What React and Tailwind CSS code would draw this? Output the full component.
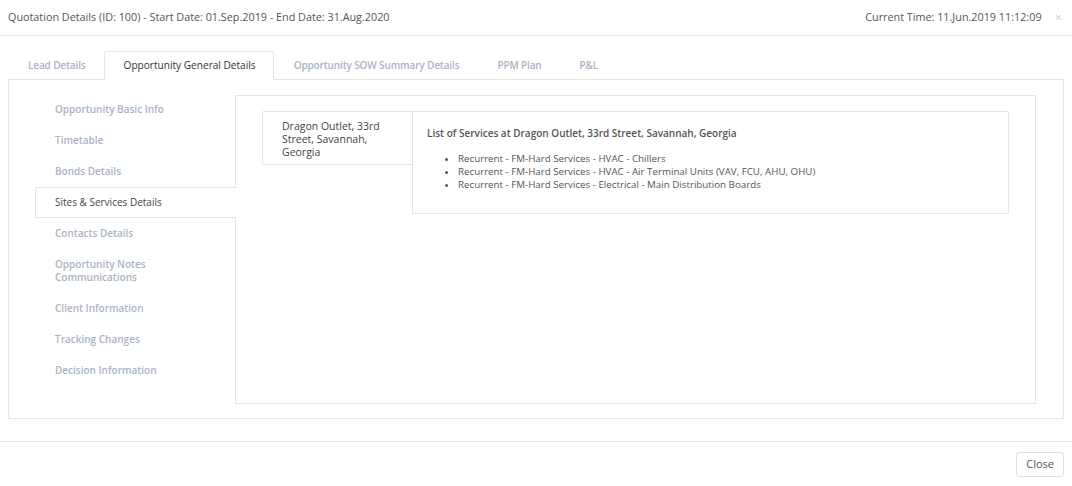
const tabs = ['Lead Details', 'Opportunity General Details', 'Opportunity SOW Summary Details', 'PPM Plan', 'P&L'];

const navItems = [
  'Opportunity Basic Info',
  'Timetable',
  'Bonds Details',
  'Sites & Services Details',
  'Contacts Details',
  'Opportunity Notes Communications',
  'Client Information',
  'Tracking Changes',
  'Decision Information',
];

const services = [
  'Recurrent - FM-Hard Services - HVAC - Chillers',
  'Recurrent - FM-Hard Services - HVAC - Air Terminal Units (VAV, FCU, AHU, OHU)',
  'Recurrent - FM-Hard Services - Electrical - Main Distribution Boards',
];

export default function App() {
  return (
    <div className="w-[1072px] h-[486px] bg-white flex flex-col text-[#555]" style={{ fontFamily: '"Open Sans", sans-serif' }}>
      {/* header */}
      <div className="h-[36px] shrink-0 flex items-center justify-between pl-[8px] pr-[10px] pb-px border-b border-[#e5e5e5] text-[10.8px]">
        <span>Quotation Details (ID: 100) - Start Date: 01.Sep.2019 - End Date: 31.Aug.2020</span>
        <div className="flex items-center gap-[13px]">
          <span>Current Time: 11.Jun.2019 11:12:09</span>
          <span className="text-[#cfcfcf] text-[13px] leading-none">×</span>
        </div>
      </div>

      {/* body */}
      <div className="flex-1 px-[8px] pt-[15px]">
        <div className="flex h-[29px] border-b border-[#e5e5e5]">
          {tabs.map((t, i) =>
            i === 1 ? (
              <div key={t} className="pl-[19px] pr-[17px] flex items-center text-[10.1px] text-[#333] bg-white border border-[#e5e5e5] border-b-white rounded-t-[3px] -mb-px">
                {t}
              </div>
            ) : (
              <div key={t} className="pl-[19px] pr-[17px] flex items-center text-[10px] tracking-[-0.13px] font-semibold text-[#a9b3c4] border border-transparent">
                {t}
              </div>
            )
          )}
        </div>

        <div className="h-[339px] border border-t-0 border-[#e5e5e5] flex pt-[15px] pb-[14px] pr-[27px]">
          <div className="w-[226px] shrink-0 -mt-px flex flex-col">
            {navItems.map((n) =>
              n === 'Sites & Services Details' ? (
                <div key={n} className="ml-[26px] h-[31px] flex items-center pl-[19px] text-[10px] text-[#444] bg-white border border-[#e5e5e5] border-r-0 -mr-px relative z-10 rounded-l-[2px]">
                  {n}
                </div>
              ) : (
                <div key={n} className="ml-[46px] pr-[60px] py-[9px] text-[10px] leading-[13px] font-semibold text-[#a9b3c4]">
                  {n}
                </div>
              )
            )}
          </div>

          <div className="flex-1 border border-[#e5e5e5] pt-[15px] pl-[26px] pr-[26px]">
            <div className="flex items-start">
              <div className="w-[150px] h-[54px] shrink-0 border border-[#e5e5e5] border-r-0 pl-[19px] pr-[28px] pt-[8px] text-[10.5px] leading-[13px] text-[#444] rounded-l-[2px]">
                Dragon Outlet, 33rd Street, Savannah, Georgia
              </div>
              <div className="flex-1 h-[103px] border border-[#e5e5e5] pl-[14px] pt-[14px]">
                <div className="text-[10px] font-semibold text-[#555]">List of Services at Dragon Outlet, 33rd Street, Savannah, Georgia</div>
                <ul className="mt-[11px] pl-[31px] list-disc text-[9.75px] leading-[13px] text-[#555]">
                  {services.map((s) => (
                    <li key={s}>{s}</li>
                  ))}
                </ul>
              </div>
            </div>
          </div>
        </div>
      </div>

      {/* footer */}
      <div className="h-[45px] shrink-0 border-t border-[#e5e5e5] flex items-center justify-end pr-[8px]">
        <button className="h-[25px] px-[9px] border border-[#e0e0e0] rounded-[3px] text-[11px] text-[#555] bg-white">Close</button>
      </div>
    </div>
  );
}
